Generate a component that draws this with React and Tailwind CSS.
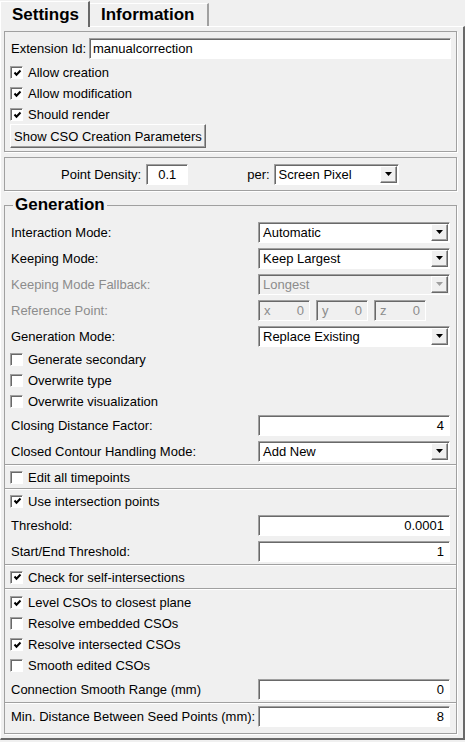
import React from 'react';

const font = { fontFamily: '"Liberation Sans", Arial, sans-serif' };

function Arrow({ disabled }) {
  return (
    <div className="flex h-full w-[17px] items-center justify-center border border-t-white border-l-white border-r-[#696969] border-b-[#696969] bg-[#f0f0f0] shadow-[inset_-1px_-1px_0_#a0a0a0]">
      <svg width="7" height="4" viewBox="0 0 7 4">
        <path d="M0 0h7L3.5 4z" fill={disabled ? '#a0a0a0' : '#000'} />
      </svg>
    </div>
  );
}

function Select({ value, disabled, className = 'w-[192px]' }) {
  return (
    <div
      className={`flex h-[21px] items-stretch border border-t-[#a0a0a0] border-l-[#a0a0a0] border-r-white border-b-white shadow-[inset_1px_1px_0_#696969] ${
        disabled ? 'bg-[#f0f0f0] text-[#8c8c8c]' : 'bg-white text-black'
      } ${className}`}
    >
      <span className="flex flex-1 items-center whitespace-nowrap pl-[4px] text-[13px] leading-none">{value}</span>
      <div className="p-[1px] pl-0">
        <Arrow disabled={disabled} />
      </div>
    </div>
  );
}

function Input({ value, className = 'w-[192px]', left = false }) {
  return (
    <div
      className={`flex h-[21px] shrink-0 items-center border border-t-[#a0a0a0] border-l-[#a0a0a0] border-r-white border-b-white bg-white shadow-[inset_1px_1px_0_#696969] px-[5px] text-[13px] leading-none ${
        left ? 'justify-start' : 'justify-end'
      } ${className}`}
    >
      {value}
    </div>
  );
}

function Coord({ axis }) {
  return (
    <div className="flex h-[21px] w-[52px] items-center justify-between border border-t-[#a0a0a0] border-l-[#a0a0a0] border-r-white border-b-white bg-[#f0f0f0] shadow-[inset_1px_1px_0_#696969] px-[5px] text-[13px] leading-none text-[#8c8c8c]">
      <span>{axis}</span>
      <span>0</span>
    </div>
  );
}

function Check({ label, checked, h = 'h-[21px]', pl = 'pl-[5px]' }) {
  return (
    <div className={`flex items-center ${pl} ${h}`}>
      <div className="flex h-[13px] w-[13px] items-center justify-center border border-t-[#a0a0a0] border-l-[#a0a0a0] border-r-white border-b-white bg-white shadow-[inset_1px_1px_0_#696969]">
        {checked && (
          <svg width="9" height="9" viewBox="0 0 9 9" className="ml-[1px] mt-[1px]">
            <path d="M1.5 3.5l2 2.2L7.5 1.5" stroke="#000" strokeWidth="2" fill="none" />
          </svg>
        )}
      </div>
      <span className="ml-[5px] whitespace-nowrap text-[13px] leading-none">{label}</span>
    </div>
  );
}

function Row({ label, children, disabled, h = 'h-[26px]' }) {
  return (
    <div className={`flex items-center justify-between pl-[6px] pr-[6px] ${h}`}>
      <span className={`whitespace-nowrap text-[13px] leading-none ${disabled ? 'text-[#8c8c8c]' : 'text-black'}`}>
        {label}
      </span>
      {children}
    </div>
  );
}

function Sep() {
  return <div className="h-[2px] border-t border-t-[#a0a0a0] border-b border-b-white" />;
}

export default function App() {
  return (
    <div className="flex h-[742px] w-[465px] flex-col overflow-hidden bg-[#f0f0f0] text-black" style={font}>
      {/* Tabs */}
      <div className="flex h-[26px] items-end">
        <div className="relative z-10 -mb-[1px] flex h-[26px] w-[90px] items-center border-l border-t border-l-white border-t-white border-r-2 border-r-[#696969] bg-[#f0f0f0] pl-[11px] text-[17px] font-bold">
          Settings
        </div>
        <div className="flex h-[23px] w-[119px] items-center border-t border-t-white border-r-2 border-r-[#a0a0a0] bg-[#f0f0f0] pl-[11px] text-[17px] font-bold">
          Information
        </div>
      </div>

      {/* Pane */}
      <div className="flex h-[714px] flex-col border-l border-t border-l-white border-t-white border-r-2 border-r-[#696969] border-b-2 border-b-[#696969] pl-[3px] pt-[4px]">
        {/* Group 1 */}
        <div className="w-[453px] border border-[#a0a0a0] shadow-[1px_1px_0_white] px-[5px] pb-[3px] pt-[5px]">
          <div className="flex h-[22px] items-center">
            <span className="ml-[1px] whitespace-nowrap text-[13px] leading-none">Extension Id:</span>
            <Input value="manualcorrection" left className="ml-auto w-[362px] !pl-[3px]" />
          </div>
          <div className="mt-[3px]">
            <Check label="Allow creation" checked pl="pl-0" />
            <Check label="Allow modification" checked pl="pl-0" />
            <Check label="Should render" checked pl="pl-0" />
          </div>
          <button className="-mt-[1px] flex h-[24px] items-center border border-t-white border-l-white border-r-[#696969] border-b-[#696969] bg-[#f0f0f0] shadow-[inset_-1px_-1px_0_#a0a0a0] px-[3px] text-[13px] leading-none">
            Show CSO Creation Parameters
          </button>
        </div>

        {/* Group 2 */}
        <div className="mt-[5px] flex h-[34px] w-[453px] items-center border border-[#a0a0a0] shadow-[1px_1px_0_white]">
          <span className="ml-[56px] text-[13px] leading-none">Point Density:</span>
          <Input value="0.1" className="ml-[5px] w-[42px] !justify-center" />
          <span className="ml-[59px] text-[13px] leading-none">per:</span>
          <Select value="Screen Pixel" className="ml-[4px] w-[125px]" />
        </div>

        {/* Generation */}
        <fieldset className="mt-[4px] w-[453px] border border-[#a0a0a0] shadow-[1px_1px_0_white] pb-[4px]">
          <legend className="ml-[8px] px-[2px] text-[17px] font-bold leading-[20px]">Generation</legend>
          <div className="pt-[4px]">
            <Row label="Interaction Mode:">
              <Select value="Automatic" />
            </Row>
            <Row label="Keeping Mode:">
              <Select value="Keep Largest" />
            </Row>
            <Row label="Keeping Mode Fallback:" disabled>
              <Select value="Longest" disabled />
            </Row>
            <Row label="Reference Point:" disabled>
              <div className="flex w-[192px] gap-[6px]">
                <Coord axis="x" />
                <Coord axis="y" />
                <Coord axis="z" />
              </div>
            </Row>
            <Row label="Generation Mode:">
              <Select value="Replace Existing" />
            </Row>
            <Check label="Generate secondary" />
            <Check label="Overwrite type" />
            <Check label="Overwrite visualization" />
            <Row label="Closing Distance Factor:">
              <Input value="4" />
            </Row>
            <Row label="Closed Contour Handling Mode:">
              <Select value="Add New" />
            </Row>
            <Sep />
            <Check label="Edit all timepoints" h="h-[22px]" />
            <Sep />
            <Check label="Use intersection points" checked h="h-[22px]" />
            <Row label="Threshold:">
              <Input value="0.0001" />
            </Row>
            <Row label="Start/End Threshold:">
              <Input value="1" />
            </Row>
            <Sep />
            <Check label="Check for self-intersections" checked h="h-[22px]" />
            <Sep />
            <div className="pt-[2px]">
              <Check label="Level CSOs to closest plane" checked />
              <Check label="Resolve embedded CSOs" />
              <Check label="Resolve intersected CSOs" checked />
              <Check label="Smooth edited CSOs" />
            </div>
            <Row label="Connection Smooth Range (mm)">
              <Input value="0" />
            </Row>
            <Sep />
            <Row label="Min. Distance Between Seed Points (mm):" h="h-[25px]">
              <Input value="8" />
            </Row>
          </div>
        </fieldset>
      </div>
    </div>
  );
}
